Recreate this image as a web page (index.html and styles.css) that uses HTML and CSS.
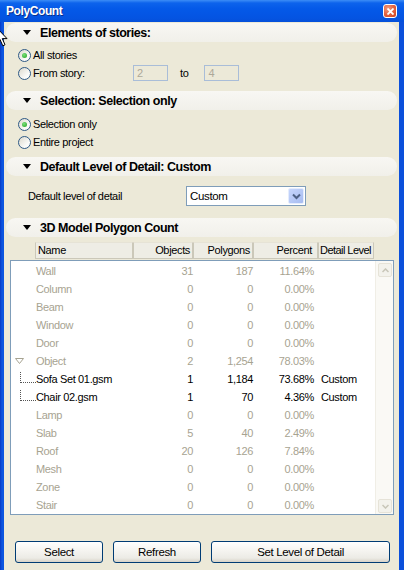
FILE: index.html
```html
<!DOCTYPE html>
<html lang="en">
<head>
  <meta charset="UTF-8" />
  <title>PolyCount</title>
  <link rel="stylesheet" href="styles.css">
</head>
<body>

<div class="window">
  <div class="titlebar">
    <span class="title">PolyCount</span>
    <span class="close">
      <svg width="7" height="7" viewBox="0 0 7 7"><path d="M0.5 0.5 L6.5 6.5 M6.5 0.5 L0.5 6.5" stroke="#fff" stroke-width="1.8"/></svg>
    </span>
  </div>

  <div class="client">
    <div class="sect-head s1"><span class="tri"></span>Elements of stories:</div>
    <div class="group g1">
      <div class="radio-row"><span class="radio on"></span>All stories</div>
      <div class="radio-row">
        <span class="radio"></span><span class="from-lbl">From story:</span>
        <span class="field">2</span><span class="to">to</span><span class="field">4</span>
      </div>
    </div>

    <div class="sect-head"><span class="tri"></span>Selection: Selection only</div>
    <div class="group g2">
      <div class="radio-row"><span class="radio on"></span>Selection only</div>
      <div class="radio-row"><span class="radio"></span>Entire project</div>
    </div>

    <div class="sect-head"><span class="tri"></span>Default Level of Detail: Custom</div>
    <div class="group g3">
      <span class="lod-lbl">Default level of detail</span>
      <div class="combo">
        <span class="combo-val">Custom</span>
        <span class="combo-btn">
          <svg width="9" height="7" viewBox="0 0 9 7"><path d="M1 1.5 L4.5 5 L8 1.5" fill="none" stroke="#4D6185" stroke-width="2"/></svg>
        </span>
      </div>
    </div>

    <div class="sect-head"><span class="tri"></span>3D Model Polygon Count</div>
    <div class="cols">
      <div class="col c-name">Name</div>
      <div class="col c-obj">Objects</div>
      <div class="col c-poly">Polygons</div>
      <div class="col c-pct">Percent</div>
      <div class="col c-lod">Detail Level</div>
    </div>

    <div class="list">
      <div class="rows" id="rows"></div>
      <div class="vscroll">
        <span class="sbtn">
          <svg width="7" height="5" viewBox="0 0 7 5"><path d="M0.5 4 L3.5 1 L6.5 4" fill="none" stroke="#C8C6B8" stroke-width="1.5"/></svg>
        </span>
        <span class="sbtn">
          <svg width="7" height="5" viewBox="0 0 7 5"><path d="M0.5 1 L3.5 4 L6.5 1" fill="none" stroke="#C8C6B8" stroke-width="1.5"/></svg>
        </span>
      </div>
    </div>

    <div class="buttons">
      <button class="btn b-sel">Select</button>
      <button class="btn b-ref">Refresh</button>
      <button class="btn b-set">Set Level of Detail</button>
    </div>
  </div>

  <svg class="cursor" width="12" height="20" viewBox="0 0 12 20">
    <path d="M0.5 0.5 L0.5 16 L4 12.5 L6.8 18.8 L9 17.8 L6.3 11.6 L11 11.6 Z" fill="#fff" stroke="#000" stroke-width="1"/>
  </svg>
</div>

<script>
// name, objects, polygons, percent, detail level, kind
const data = [
  ['Wall', 31, 187, '11.64%', '', ''],
  ['Column', 0, 0, '0.00%', '', ''],
  ['Beam', 0, 0, '0.00%', '', ''],
  ['Window', 0, 0, '0.00%', '', ''],
  ['Door', 0, 0, '0.00%', '', ''],
  ['Object', 2, '1,254', '78.03%', '', 'parent'],
  ['Sofa Set 01.gsm', 1, '1,184', '73.68%', 'Custom', 'child'],
  ['Chair 02.gsm', 1, 70, '4.36%', 'Custom', 'child'],
  ['Lamp', 0, 0, '0.00%', '', ''],
  ['Slab', 5, 40, '2.49%', '', ''],
  ['Roof', 20, 126, '7.84%', '', ''],
  ['Mesh', 0, 0, '0.00%', '', ''],
  ['Zone', 0, 0, '0.00%', '', ''],
  ['Stair', 0, 0, '0.00%', '', '']
];

const rows = document.getElementById('rows');
data.forEach(function (d) {
  const kind = d[5];
  let lead = '';
  if (kind === 'parent') {
    lead = '<svg class="twisty" width="9" height="6" viewBox="0 0 9 6"><path d="M0.5 0.5 L8.5 0.5 L4.5 5.5 Z" fill="#fff" stroke="#A7A391"/></svg>';
  } else if (kind === 'child') {
    lead = '<span class="branch"></span>';
  }
  const row = document.createElement('div');
  row.className = 'row' + (kind === 'child' ? ' active' : '') + (kind ? ' ' + kind : '');
  row.innerHTML =
    '<span class="r-name">' + lead + d[0] + '</span>' +
    '<span class="r-num">' + d[1] + '</span>' +
    '<span class="r-num">' + d[2] + '</span>' +
    '<span class="r-num r-pct">' + d[3] + '</span>' +
    '<span class="r-lod">' + d[4] + '</span>';
  rows.appendChild(row);
});
</script>
</body>
</html>
```

FILE: styles.css
```css
body {
  margin: 0;
  padding: 0;
  background: #0A4FD8;
  font-family: "Liberation Sans", Arial, sans-serif;
  font-size: 11px;
  letter-spacing: -0.35px;
  color: #000;
}

.window {
  position: relative;
  width: 404px;
  height: 570px;
  overflow: hidden;
  display: flex;
  flex-direction: column;
  background: linear-gradient(to right, #0738C4 0, #0C55E0 2px, #0B50DB 100%);
}

/* XP title bar */
.titlebar {
  flex: none;
  height: 22px;
  display: flex;
  align-items: center;
  padding: 0 7px 0 6px;
  background: linear-gradient(#3C8DF6 0, #0D63EC 3px, #0459E8 40%, #0454E2 80%, #0550DA 100%);
}

.title {
  color: #fff;
  font-weight: bold;
  font-size: 12px;
  letter-spacing: -0.4px;
  text-shadow: 1px 1px 0 #0A2E8C;
}

.close {
  margin-left: auto;
  width: 14px;
  height: 14px;
  box-sizing: border-box;
  border: 1px solid #fff;
  border-radius: 3px;
  background: radial-gradient(circle at 35% 30%, #F29A7C 0, #E3603D 55%, #C8401E 100%);
  display: flex;
  align-items: center;
  justify-content: center;
}

.close svg {
  display: block;
}

.client {
  flex: 1;
  margin: 0 5px 0 4px;
  background: #ECE9D8;
  display: flex;
  flex-direction: column;
}

/* collapsible section headers */
.sect-head {
  height: 19px;
  margin: 0 2px;
  padding-left: 17px;
  border-radius: 10px;
  background: linear-gradient(#F8F7F3, #F1F0EA);
  display: flex;
  align-items: center;
  font-weight: bold;
  font-size: 12.5px;
  letter-spacing: -0.45px;
}

.sect-head.s1 {
  margin-top: 1px;
}

.tri {
  width: 0;
  height: 0;
  border-left: 4.5px solid transparent;
  border-right: 4.5px solid transparent;
  border-top: 5px solid #000;
  margin-right: 9px;
}

.group {
  padding-left: 14px;
}

.g1 {
  padding-top: 4px;
  padding-bottom: 9px;
}

.g2 {
  padding-top: 5px;
  padding-bottom: 6px;
}

.g3 {
  display: flex;
  align-items: center;
  padding: 10px 0 12px 24px;
}

.radio-row {
  height: 18px;
  display: flex;
  align-items: center;
}

.radio {
  width: 13px;
  height: 13px;
  box-sizing: border-box;
  border: 1px solid #2F5A86;
  border-radius: 50%;
  background: linear-gradient(135deg, #DCD9CD, #FBFBF9 70%);
  margin-right: 2px;
  display: flex;
  align-items: center;
  justify-content: center;
}

.radio.on::after {
  content: "";
  width: 5px;
  height: 5px;
  border-radius: 50%;
  background: radial-gradient(circle at 40% 35%, #7BE07B, #21A121);
}

.from-lbl {
  width: 100px;
}

.field {
  width: 35px;
  height: 16px;
  box-sizing: border-box;
  border: 1px solid #A9BDD8;
  padding-left: 3px;
  line-height: 14px;
  color: #ACA899;
}

.to {
  margin: 0 16px 0 12px;
}

.lod-lbl {
  width: 158px;
}

.combo {
  width: 120px;
  height: 20px;
  box-sizing: border-box;
  border: 1px solid #7F9DB9;
  background: #fff;
  display: flex;
  align-items: center;
  padding: 1px;
}

.combo-val {
  flex: 1;
  padding-left: 2px;
  font-size: 11.5px;
}

.combo-btn {
  width: 16px;
  height: 16px;
  box-sizing: border-box;
  border: 1px solid #E4ECFD;
  border-radius: 2px;
  background: linear-gradient(135deg, #C6D6FC, #B3C6F5 60%, #A6BBF0);
  display: flex;
  align-items: center;
  justify-content: center;
}

/* list view */
.cols {
  display: flex;
  height: 17px;
  margin: 5px 0 0 31px;
}

.col {
  box-sizing: border-box;
  height: 17px;
  line-height: 15px;
  border: 1px solid #CBC8B9;
  border-top-color: #E6E3D6;
  background: #EEEDE5;
  padding: 0 2px;
  white-space: nowrap;
}

.c-name { width: 98px; }
.c-obj { width: 60px; text-align: right; }
.c-poly { width: 60px; text-align: right; }
.c-pct { width: 65px; text-align: right; padding-right: 5px; }
.c-lod { width: 56px; padding: 0 1px; letter-spacing: -0.55px; }

.list {
  display: flex;
  height: 255px;
  box-sizing: border-box;
  margin: 1px 5px 0 6px;
  border: 1px solid #7F9DB9;
  background: #fff;
}

.rows {
  width: 365px;
  padding-top: 1px;
}

.row {
  display: grid;
  grid-template-columns: 122px 60px 60px 61px 1fr;
  height: 18px;
  line-height: 18px;
  color: #A7A391;
}

.row.active {
  color: #000;
}

.r-name {
  display: flex;
  align-items: center;
  padding-left: 25px;
  white-space: nowrap;
}

.parent .r-name {
  padding-left: 4px;
}

.twisty {
  margin-right: 12px;
}

.child .r-name {
  padding-left: 9px;
  align-items: flex-start;
}

.branch {
  width: 16px;
  height: 11px;
  box-sizing: border-box;
  margin-top: 2px;
  border-left: 1px dotted #555;
  border-bottom: 1px dotted #555;
}

.r-num {
  text-align: right;
}

.r-lod {
  padding-left: 7px;
}

.vscroll {
  flex: 1;
  display: flex;
  flex-direction: column;
  justify-content: space-between;
  padding: 2px 1px 1px 2px;
  background: #FAF9F5;
  border-left: 1px solid #F0EEE6;
}

.sbtn {
  width: 14px;
  height: 14px;
  box-sizing: border-box;
  border: 1px solid #E6E3D8;
  border-radius: 2px;
  background: #F3F2EC;
  display: flex;
  align-items: center;
  justify-content: center;
}

/* dialog buttons */
.buttons {
  display: flex;
  gap: 10px;
  margin-top: 26px;
  padding-left: 11px;
}

.btn {
  height: 22px;
  box-sizing: border-box;
  border: 1px solid #003C74;
  border-radius: 3px;
  background: linear-gradient(#FFFFFF 0, #F6F5F1 40%, #ECEBE5 80%, #D8D3C8 100%);
  font-family: "Liberation Sans", Arial, sans-serif;
  font-size: 11.5px;
  letter-spacing: -0.35px;
  color: #000;
  padding: 0;
}

.b-sel { width: 88px; }
.b-ref { width: 88px; }
.b-set { width: 179px; }

.cursor {
  position: absolute;
  left: -4px;
  top: 27px;
}
```
